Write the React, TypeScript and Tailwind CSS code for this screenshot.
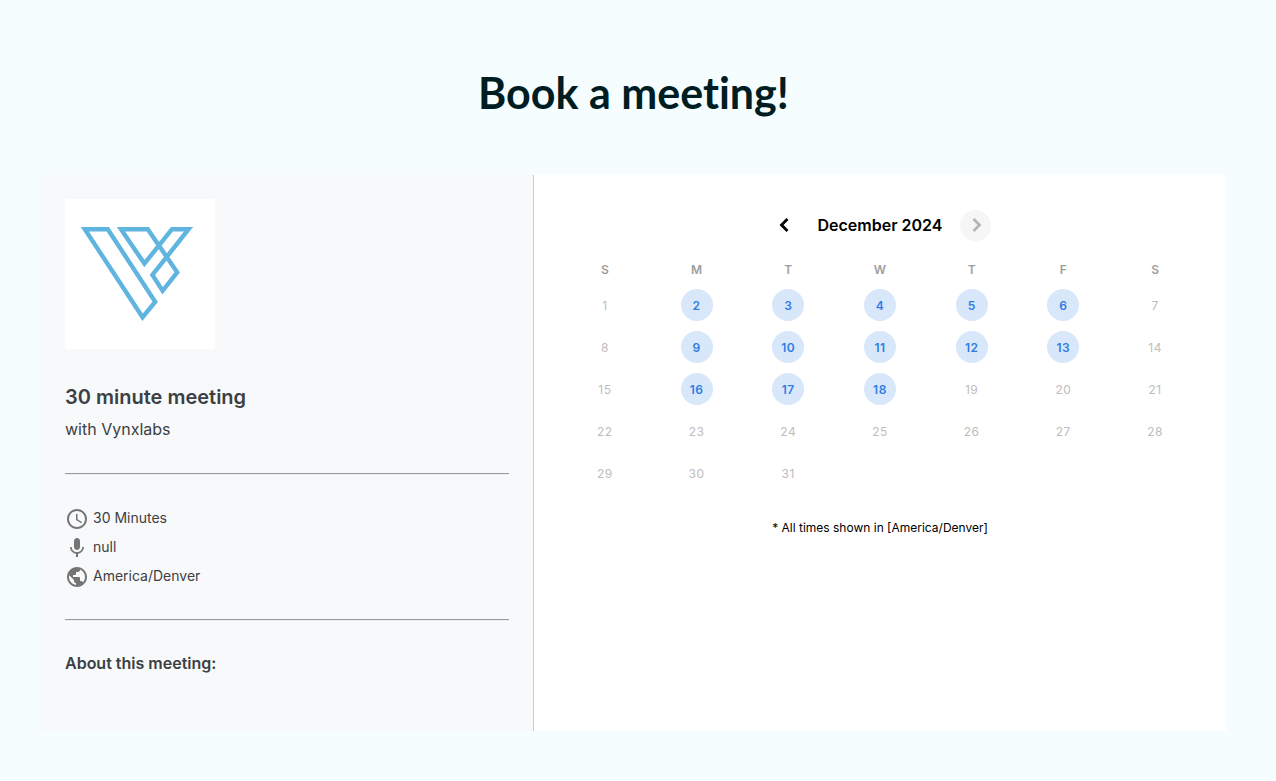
import type { ReactNode } from "react";
import { MdAccessTime, MdMic, MdPublic } from "react-icons/md";

const weekdays = ["S", "M", "T", "W", "T", "F", "S"];
const weekdayNames = ["Sunday", "Monday", "Tuesday", "Wednesday", "Thursday", "Friday", "Saturday"];
const weeks = [0, 1, 2, 3, 4].map((w) => [1, 2, 3, 4, 5, 6, 7].map((d) => w * 7 + d));
const available = new Set([2, 3, 4, 5, 6, 9, 10, 11, 12, 13, 16, 17, 18]);

function Logo() {
  return (
    <svg
      className="size-[150px] bg-white"
      viewBox="0 0 150 150"
      fill="none"
      stroke="#5fb4e0"
      strokeWidth="4.4"
      strokeMiterlimit="10"
      role="img"
      aria-label="Vynxlabs"
    >
      <path d="M19.8 30.2H42.8L90.2 102.8L77.6 118.2Z" />
      <path d="M56 30.2H82.8L112.2 73.3L97.6 91.8L87.4 76L123.6 30.2H107L79.4 64.6Z" />
    </svg>
  );
}

function Chevron({ path }: { path: string }) {
  return (
    <svg className="size-full" viewBox="0 0 31 31" fill="none" stroke="currentColor" strokeWidth="2.8" aria-hidden="true">
      <path d={path} />
    </svg>
  );
}

function Divider() {
  return <hr className="h-[2px] border-0 border-t border-b border-t-[#9a9a9a] border-b-[#eeeeee]" />;
}

function Detail({ icon, children }: { icon: ReactNode; children: ReactNode }) {
  return (
    <li className="flex h-[29px] items-center gap-1 text-sm leading-5 text-[#3c4043]">
      <span className="mt-[2px] text-2xl text-[#757575]">{icon}</span>
      {children}
    </li>
  );
}

function Day({ day }: { day: number }) {
  const open = available.has(day);
  return (
    <button
      type="button"
      disabled={!open}
      className={
        open
          ? "mx-auto flex size-8 items-center justify-center rounded-full bg-[#d8e7fa] pt-px text-xs font-semibold tracking-[0.5px] text-[#2f7de1]"
          : "mx-auto flex size-8 items-center justify-center rounded-full pt-px text-xs tracking-[0.5px] text-[#bdbdbd]"
      }
    >
      {day}
    </button>
  );
}

export default function App() {
  return (
    <div className="min-h-screen bg-[#f5fdff] pr-[50px] pb-[50px] pl-[41px] font-['Inter',sans-serif]">
      <h1 className="pt-[65px] pb-[54px] text-center font-['Lato',sans-serif] text-[43px] leading-14 font-bold text-[#001d23] [font-variant-ligatures:none]">
        Book a meeting!
      </h1>
      <main className="grid min-h-[556px] grid-cols-[493fr_692fr] bg-white">
        <section className="border-r border-[#cccccc] bg-[#f8f9fb] p-6">
          <Logo />
          <h2 className="mt-8 text-xl leading-8 font-semibold text-[#3c4043]">30 minute meeting</h2>
          <p className="mt-1 mb-8 text-base leading-6 text-[#3c4043]">with Vynxlabs</p>
          <Divider />
          <ul className="my-7 pb-px">
            <Detail icon={<MdAccessTime />}>30 Minutes</Detail>
            <Detail icon={<MdMic />}>null</Detail>
            <Detail icon={<MdPublic />}>America/Denver</Detail>
          </ul>
          <Divider />
          <h3 className="mt-[30px] text-base leading-6 font-semibold text-[#3c4043]">About this meeting:</h3>
        </section>
        <section className="px-[25px] pt-[34px]">
          <div className="flex items-center justify-center gap-[18px]">
            <button type="button" aria-label="Previous month" className="size-[31px] rounded-full text-black">
              <Chevron path="M18.5 9L12.5 15L18.5 21" />
            </button>
            <h2 className="text-base leading-8 font-semibold text-black">December 2024</h2>
            <button
              type="button"
              disabled
              aria-label="Next month"
              className="size-[31px] rounded-full bg-[#f6f6f6] text-[#b5b5b5]"
            >
              <Chevron path="M13.5 9L19.5 15L13.5 21" />
            </button>
          </div>
          <table className="mt-[15px] w-full table-fixed">
            <thead>
              <tr>
                {weekdays.map((d, i) => (
                  <th key={i} abbr={weekdayNames[i]} className="h-7 p-0 text-xs font-semibold text-[#9e9e9e]">
                    {d}
                  </th>
                ))}
              </tr>
            </thead>
            <tbody>
              {weeks.map((week) => (
                <tr key={week[0]}>
                  {week.map((day) => (
                    <td key={day} className="h-[42px] p-0">
                      {day <= 31 && <Day day={day} />}
                    </td>
                  ))}
                </tr>
              ))}
            </tbody>
          </table>
          <p className="mt-[26px] text-center text-xs leading-4 text-black">* All times shown in [America/Denver]</p>
        </section>
      </main>
    </div>
  );
}
